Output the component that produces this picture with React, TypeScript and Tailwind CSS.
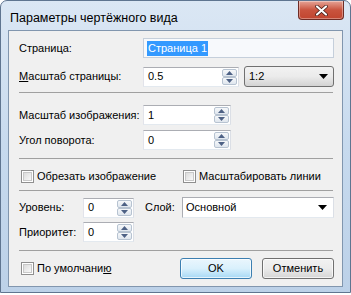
import React from "react";

const Up = () => (
  <svg width="7" height="4" viewBox="0 0 7 4"><path d="M0 4 L3.5 0 L7 4 Z" fill="#4d6185" /></svg>
);
const Down = () => (
  <svg width="7" height="4" viewBox="0 0 7 4"><path d="M0 0 L3.5 4 L7 0 Z" fill="#4d6185" /></svg>
);
const DropArrow = () => (
  <svg width="9" height="5" viewBox="0 0 9 5"><path d="M0 0 L9 0 L4.5 5 Z" fill="#000" /></svg>
);

function Spin({ value, w }: { value: string; w: string }) {
  return (
    <div className={`flex h-[20px] ${w} border border-[#abadb3] border-r-[#dbdfe6] border-b-[#e3e9ef] border-l-[#e2e3ea] bg-white`}>
      <div className="flex flex-1 items-center pl-[4px] text-black">{value}</div>
      <div className="flex w-[17px] flex-col p-[1px]">
        <div className="flex flex-1 items-center justify-center rounded-[2px] border border-[#b7c3d1] bg-gradient-to-b from-[#f6f8fa] to-[#dfe6ee]">
          <Up />
        </div>
        <div className="flex flex-1 items-center justify-center rounded-[2px] border border-[#b7c3d1] bg-gradient-to-b from-[#f6f8fa] to-[#dfe6ee]">
          <Down />
        </div>
      </div>
    </div>
  );
}

function Check({ children }: { children: React.ReactNode }) {
  return (
    <div className="flex items-center whitespace-nowrap">
      <div className="ml-[2px] h-[13px] w-[13px] shrink-0 border border-[#8f8f8f] bg-white p-[1px]">
        <div className="h-full w-full border border-[#c8c8c8] bg-gradient-to-br from-[#dcdcdc] to-[#f8f8f8]" />
      </div>
      <span className="ml-[3px]">{children}</span>
    </div>
  );
}

function Sep() {
  return <div className="mr-[9px] h-px bg-[#a0a0a0]" />;
}

export default function App() {
  return (
    <div className="h-[295px] w-[351px] whitespace-nowrap bg-white font-['Liberation_Sans',sans-serif] text-[11px] text-black">
      <div className="flex h-[293px] w-[351px] flex-col rounded-t-[7px] border border-[#5f7590] bg-gradient-to-b from-[#dbe7f4] via-[#c7daee] to-[#bcd1e8] px-[7px] pb-[5px]">
        {/* title bar */}
        <div className="flex h-[29px] items-start">
          <div className="mt-[8px] ml-[2px] flex-1 text-[12.5px] text-black">Параметры чертёжного вида</div>
          <div className="mr-[-1px] flex h-[19px] w-[46px] items-center justify-center rounded-b-[4px] border border-t-0 border-[#6e2c25] bg-gradient-to-b from-[#e5a497] via-[#c9533e] to-[#c1452f] shadow-[inset_0_0_0_1px_rgba(255,255,255,0.35)]">
            <svg width="13" height="11" viewBox="0 0 13 11">
              <path d="M2 1.5 L11 9.5 M11 1.5 L2 9.5" stroke="#3a1510" strokeWidth="3.6" strokeLinecap="round" />
              <path d="M2 1.5 L11 9.5 M11 1.5 L2 9.5" stroke="#ffffff" strokeWidth="2.2" strokeLinecap="round" />
            </svg>
          </div>
        </div>
        {/* client */}
        <div className="flex flex-1 flex-col border border-[#8196ae] bg-[#f0f0f0] pl-[10px] pt-[7px]">
          {/* row 1 */}
          <div className="flex h-[20px] items-center">
            <div className="w-[124px]">Страница:</div>
            <div className="flex h-[20px] w-[191px] items-center border border-[#c5cfdb] bg-[#f7f9fc] pl-[3px]">
              <span className="bg-[#3399ff] px-[1px] leading-[15px] text-white">Страница 1</span>
            </div>
          </div>
          {/* row 2 */}
          <div className="mt-[8px] flex h-[21px] items-center">
            <div className="w-[124px]"><span className="underline">М</span>асштаб страницы:</div>
            <Spin value="0.5" w="w-[96px]" />
            <div className="ml-[5px] flex h-[21px] w-[90px] items-center rounded-[3px] border border-[#707070] bg-gradient-to-b from-[#f2f2f2] via-[#ebebeb] to-[#d3d3d3] pl-[4px] pr-[5px]">
              <span className="flex-1">1:2</span>
              <DropArrow />
            </div>
          </div>
          <div className="mt-[5px]"><Sep /></div>
          {/* row 3 */}
          <div className="mt-[12px] flex h-[20px] items-center">
            <div className="w-[124px]">Масштаб изображения:</div>
            <Spin value="1" w="w-[88px]" />
          </div>
          {/* row 4 */}
          <div className="mt-[5px] flex h-[20px] items-center">
            <div className="w-[124px]">Угол поворота:</div>
            <Spin value="0" w="w-[88px]" />
          </div>
          <div className="mt-[8px]"><Sep /></div>
          {/* checkboxes */}
          <div className="mt-[10px] flex h-[14px] items-center">
            <div className="w-[162px]"><Check>Обрезать изображение</Check></div>
            <Check>Масштабировать линии</Check>
          </div>
          <div className="mt-[7px]"><Sep /></div>
          {/* row 5 */}
          <div className="mt-[6px] flex h-[21px] items-center">
            <div className="w-[64px]">Уровень:</div>
            <Spin value="0" w="w-[51px]" />
            <div className="ml-[11px] w-[37px]">Слой:</div>
            <div className="flex h-[21px] w-[152px] items-center border border-[#abadb3] border-b-[#e3e9ef] border-r-[#dbdfe6] bg-white pl-[3px] pr-[6px]">
              <span className="flex-1">Основной</span>
              <DropArrow />
            </div>
          </div>
          {/* row 6 */}
          <div className="mt-[4px] flex h-[20px] items-center">
            <div className="w-[64px]">Приоритет:</div>
            <Spin value="0" w="w-[51px]" />
          </div>
          <div className="mt-[8px]"><Sep /></div>
          {/* bottom */}
          <div className="mt-[7px] flex h-[21px] items-center">
            <div className="w-[161px]"><Check><span>По умолчани<span className="underline">ю</span></span></Check></div>
            <div className="flex h-[21px] w-[72px] items-center justify-center rounded-[3px] border border-[#3c7fb1] bg-gradient-to-b from-[#eaf6fd] via-[#d9f0fc] to-[#a7d9f5] shadow-[inset_0_0_0_1px_rgba(255,255,255,0.7)]">
              OK
            </div>
            <div className="ml-[10px] flex h-[21px] w-[72px] items-center justify-center rounded-[3px] border border-[#707070] bg-gradient-to-b from-[#f2f2f2] via-[#ebebeb] to-[#d5d5d5] shadow-[inset_0_0_0_1px_rgba(255,255,255,0.7)]">
              Отменить
            </div>
          </div>
        </div>
      </div>
    </div>
  );
}
